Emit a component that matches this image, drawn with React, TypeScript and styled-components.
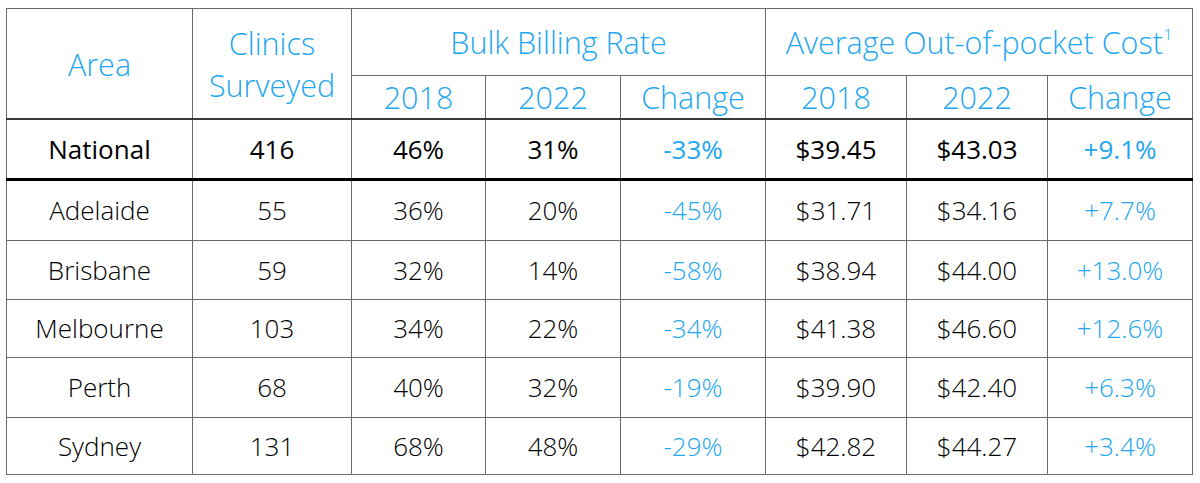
import React from 'react';
import styled, { createGlobalStyle } from 'styled-components';

const GlobalStyle = createGlobalStyle`
  html, body {
    margin: 0;
    padding: 0;
    background: #ffffff;
  }
`;

const Page = styled.div`
  width: 1200px;
  height: 483px;
  padding: 8px 0 0 6px;
  box-sizing: border-box;
  font-family: 'Open Sans', 'Noto Sans', sans-serif;
`;

const Table = styled.table`
  border-collapse: collapse;
  table-layout: fixed;
  width: 1186px;
  border: 1px solid #6b6b6b;
`;

const HeadCell = styled.th<{ $h?: number; $closing?: boolean }>`
  border: 1px solid #6b6b6b;
  border-bottom: ${(p) => (p.$closing ? '2px solid #3a3a3a' : '1px solid #6b6b6b')};
  color: #22a6f2;
  font-weight: 300;
  font-size: 30.5px;
  line-height: 42px;
  text-align: center;
  vertical-align: middle;
  padding: 0;
  height: ${(p) => (p.$h ? `${p.$h}px` : 'auto')};
`;

const Sup = styled.sup`
  font-size: 15px;
  line-height: 0;
  vertical-align: 14px;
  margin-left: 1px;
`;

const Row = styled.tr<{ $h: number; $lead?: boolean }>`
  height: ${(p) => p.$h}px;
  border-bottom: ${(p) => (p.$lead ? '3px solid #000' : '1px solid #6b6b6b')};
`;

const Cell = styled.td<{ $accent?: boolean; $strong?: boolean }>`
  border-left: 1px solid #6b6b6b;
  border-right: 1px solid #6b6b6b;
  padding: 0;
  text-align: center;
  vertical-align: middle;
  font-size: 26px;
  font-weight: ${(p) => (p.$strong ? 400 : 300)};
  color: ${(p) => (p.$accent ? '#22a6f2' : '#000')};
`;

const widths = [186, 159, 134, 135, 145, 141, 141, 145];

type Entry = {
  area: string;
  clinics: string;
  bb18: string;
  bb22: string;
  bbChange: string;
  cost18: string;
  cost22: string;
  costChange: string;
  h: number;
};

const national: Entry = {
  area: 'National',
  clinics: '416',
  bb18: '46%',
  bb22: '31%',
  bbChange: '-33%',
  cost18: '$39.45',
  cost22: '$43.03',
  costChange: '+9.1%',
  h: 60,
};

const cities: Entry[] = [
  { area: 'Adelaide', clinics: '55', bb18: '36%', bb22: '20%', bbChange: '-45%', cost18: '$31.71', cost22: '$34.16', costChange: '+7.7%', h: 61 },
  { area: 'Brisbane', clinics: '59', bb18: '32%', bb22: '14%', bbChange: '-58%', cost18: '$38.94', cost22: '$44.00', costChange: '+13.0%', h: 59 },
  { area: 'Melbourne', clinics: '103', bb18: '34%', bb22: '22%', bbChange: '-34%', cost18: '$41.38', cost22: '$46.60', costChange: '+12.6%', h: 58 },
  { area: 'Perth', clinics: '68', bb18: '40%', bb22: '32%', bbChange: '-19%', cost18: '$39.90', cost22: '$42.40', costChange: '+6.3%', h: 60 },
  { area: 'Sydney', clinics: '131', bb18: '68%', bb22: '48%', bbChange: '-29%', cost18: '$42.82', cost22: '$44.27', costChange: '+3.4%', h: 57 },
];

function DataRow({ e, lead }: { e: Entry; lead?: boolean }) {
  return (
    <Row $h={e.h} $lead={lead}>
      <Cell $strong={lead}>{e.area}</Cell>
      <Cell $strong={lead}>{e.clinics}</Cell>
      <Cell $strong={lead}>{e.bb18}</Cell>
      <Cell $strong={lead}>{e.bb22}</Cell>
      <Cell $strong={lead} $accent>{e.bbChange}</Cell>
      <Cell $strong={lead}>{e.cost18}</Cell>
      <Cell $strong={lead}>{e.cost22}</Cell>
      <Cell $strong={lead} $accent>{e.costChange}</Cell>
    </Row>
  );
}

export default function App() {
  return (
    <Page>
      <GlobalStyle />
      <Table>
        <colgroup>
          {widths.map((w, i) => (
            <col key={i} style={{ width: w }} />
          ))}
        </colgroup>
        <thead>
          <tr>
            <HeadCell rowSpan={2} $closing>Area</HeadCell>
            <HeadCell rowSpan={2} $closing>
              Clinics
              <br />
              Surveyed
            </HeadCell>
            <HeadCell colSpan={3} $h={66}>Bulk Billing Rate</HeadCell>
            <HeadCell colSpan={3} $h={66}>
              Average Out-of-pocket Cost<Sup>1</Sup>
            </HeadCell>
          </tr>
          <tr>
            <HeadCell $h={42} $closing>2018</HeadCell>
            <HeadCell $h={42} $closing>2022</HeadCell>
            <HeadCell $h={42} $closing>Change</HeadCell>
            <HeadCell $h={42} $closing>2018</HeadCell>
            <HeadCell $h={42} $closing>2022</HeadCell>
            <HeadCell $h={42} $closing>Change</HeadCell>
          </tr>
        </thead>
        <tbody>
          <DataRow e={national} lead />
          {cities.map((c) => (
            <DataRow key={c.area} e={c} />
          ))}
        </tbody>
      </Table>
    </Page>
  );
}
